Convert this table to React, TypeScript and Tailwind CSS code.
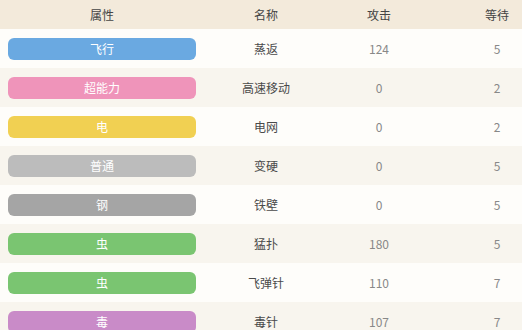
const rows = [
  { type: "飞行", color: "bg-[#6aa9e1]", name: "蒸返", power: "124", wait: "5" },
  { type: "超能力", color: "bg-[#ef94ba]", name: "高速移动", power: "0", wait: "2" },
  { type: "电", color: "bg-[#f1d052]", name: "电网", power: "0", wait: "2" },
  { type: "普通", color: "bg-[#bcbcbc]", name: "变硬", power: "0", wait: "5" },
  { type: "钢", color: "bg-[#a5a5a5]", name: "铁壁", power: "0", wait: "5" },
  { type: "虫", color: "bg-[#7ac571]", name: "猛扑", power: "180", wait: "5" },
  { type: "虫", color: "bg-[#7ac571]", name: "飞弹针", power: "110", wait: "7" },
  { type: "毒", color: "bg-[#c98bc8]", name: "毒针", power: "107", wait: "7" },
];

const cols = "grid grid-cols-[204px_124px_102px_134px]";

export default function App() {
  return (
    <div className="h-[330px] w-[522px] overflow-hidden bg-[#fdfcf9] font-['Noto_Sans_CJK_SC','Noto_Sans',sans-serif] text-[12px]">
      <div className={`${cols} h-[29px] items-center bg-[#f3eadb] text-center text-[#444]`}>
        <span>属性</span>
        <span>名称</span>
        <span>攻击</span>
        <span>等待</span>
      </div>
      {rows.map((row, i) => (
        <div
          className={`${cols} h-[39px] items-center text-center ${i % 2 === 0 ? "bg-[#fefdfa]" : "bg-[#f8f5ee]"}`}
          key={i}
        >
          <div className="px-2">
            <div className={`flex h-[22px] items-center justify-center rounded-[6px] text-white ${row.color}`}>{row.type}</div>
          </div>
          <span className="text-[#4a4a4a]">{row.name}</span>
          <span className="text-[#888]">{row.power}</span>
          <span className="text-[#888]">{row.wait}</span>
        </div>
      ))}
    </div>
  );
}
